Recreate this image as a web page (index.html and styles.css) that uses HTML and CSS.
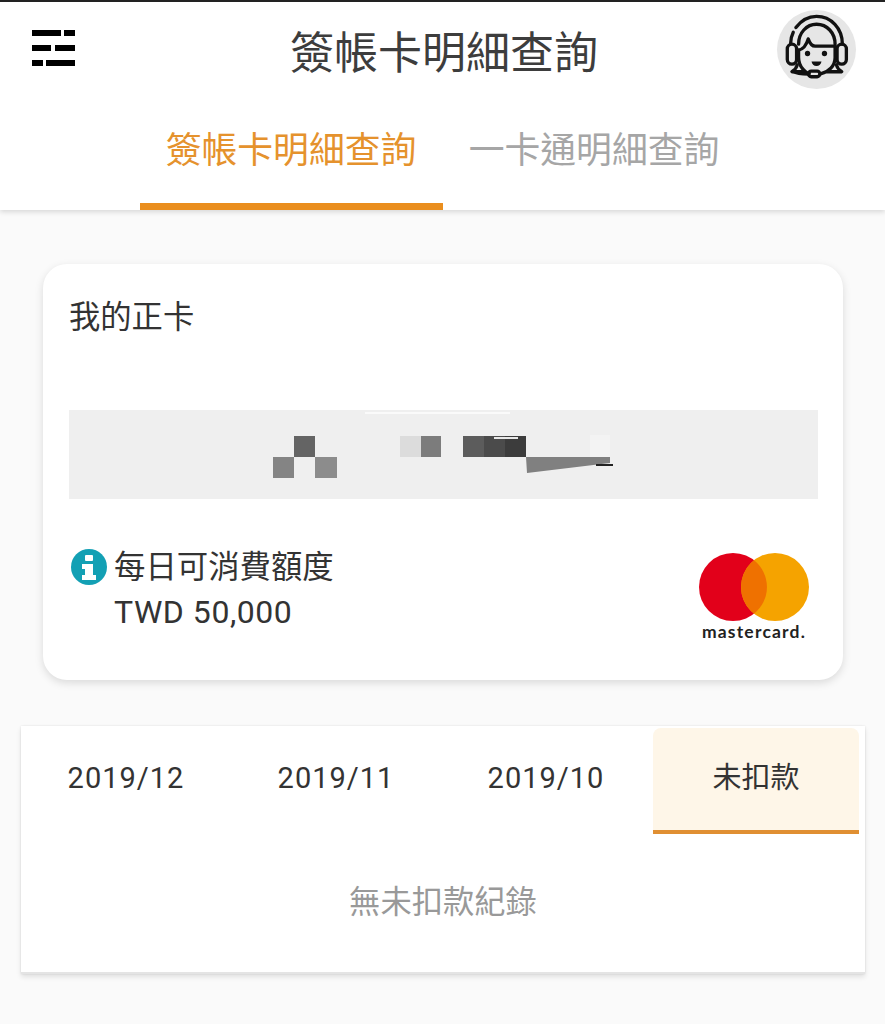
FILE: index.html
```html
<!DOCTYPE html>
<html lang="zh-Hant">
<head>
    <meta charset="UTF-8">
    <meta name="viewport" content="width=device-width, initial-scale=1.0">
    <title>簽帳卡明細查詢</title>
    <link rel="stylesheet" href="styles.css">
</head>
<body>
    <header class="site-header">
        <div class="top-bar">
            <svg class="menu-icon" width="43" height="36" viewBox="0 0 43 36">
                <rect x="0" y="0" width="29" height="6"/>
                <rect x="32" y="0" width="11" height="6"/>
                <rect x="0" y="15" width="19" height="6"/>
                <rect x="23" y="15" width="20" height="6"/>
                <rect x="0" y="30" width="11" height="6"/>
                <rect x="14" y="30" width="29" height="6"/>
            </svg>
            <h1 class="page-title">簽帳卡明細查詢</h1>
            <div class="avatar">
                <svg width="79" height="79" viewBox="111 29 238 238" fill="none" stroke="#111" stroke-width="10" stroke-linecap="round" stroke-linejoin="round">
                    <path d="M152 130 C152 118 155 106 160 96"/>
                    <path d="M168 82 C184 60 206 48 230 48 C274 48 308 84 308 132"/>
                    <path d="M176 132 C176 98 200 72 230 72 C262 72 286 98 286 132"/>
                    <rect x="142" y="132" width="28" height="60" rx="14"/>
                    <rect x="292" y="132" width="28" height="60" rx="14"/>
                    <path d="M176 150 C186 148 198 140 205 116 C210 130 216 138 226 138 L286 138"/>
                    <path d="M176 150 L176 172 C176 202 200 220 208 220"/>
                    <path d="M286 138 L286 172 C286 198 266 216 244 221"/>
                    <path d="M172 194 C170 204 164 210 156 215 L194 215"/>
                    <path d="M290 194 C292 204 298 210 306 215 L262 215"/>
                    <path d="M160 214 C172 222 190 222 206 222"/>
                    <rect x="206" y="213" width="34" height="17" rx="8"/>
                    <circle cx="203" cy="160" r="8" fill="#111" stroke="none"/>
                    <circle cx="254" cy="160" r="8" fill="#111" stroke="none"/>
                    <path d="M215 184 L245 184 C244 192 238 198 230 198 C222 198 216 192 215 184 Z" fill="#111" stroke="none"/>
                </svg>
            </div>
        </div>
        <nav class="main-tabs">
            <a class="main-tab active">簽帳卡明細查詢</a>
            <a class="main-tab">一卡通明細查詢</a>
        </nav>
    </header>

    <main class="content">
        <section class="card-box">
            <p class="card-name">我的正卡</p>
            <div class="card-strip">
                <svg width="749" height="89" viewBox="0 0 749 89">
                    <rect x="296" y="2" width="145" height="2" fill="#fafafa"/>
                    <rect x="521" y="25" width="20" height="22" fill="#f3f3f3"/>
                    <rect x="225" y="26" width="21" height="21" fill="#646464"/>
                    <rect x="204" y="47" width="21" height="21" fill="#848484"/>
                    <rect x="246" y="47" width="22" height="21" fill="#8c8c8c"/>
                    <rect x="331" y="26" width="21" height="21" fill="#dcdcdc"/>
                    <rect x="352" y="26" width="20" height="21" fill="#7c7c7c"/>
                    <rect x="394" y="26" width="21" height="21" fill="#5c5c5c"/>
                    <rect x="415" y="26" width="21" height="21" fill="#4b4b4b"/>
                    <rect x="436" y="26" width="21" height="21" fill="#3c3c3c"/>
                    <rect x="425" y="27" width="24" height="2" fill="#e8e8e8"/>
                    <path d="M457 47 L541 47 L541 53 L458 63 Z" fill="#808080"/>
                    <rect x="527" y="54" width="17" height="2" fill="#222"/>
                </svg>
            </div>
            <div class="card-info">
                <svg class="info-icon" width="36" height="36" viewBox="0 0 36 36">
                    <circle cx="18" cy="18" r="18" fill="#13a0b4"/>
                    <rect x="14" y="6" width="8" height="6" rx="1" fill="#fff"/>
                    <path d="M11 15 H22 V26 H25 V31 H11 V26 H14 V20 H11 Z" fill="#fff"/>
                </svg>
                <div class="limit-text">
                    <div>每日可消費額度</div>
                    <div class="limit-amount">TWD 50,000</div>
                </div>
                <div class="mc-logo">
                    <svg width="110" height="68" viewBox="0 0 110 68">
                        <circle cx="34" cy="34" r="34" fill="#e2001a"/>
                        <circle cx="76" cy="34" r="34" fill="#f5a300"/>
                        <path d="M55 7.3 A34 34 0 0 1 55 60.7 A34 34 0 0 1 55 7.3 Z" fill="#ef7100"/>
                    </svg>
                    <span class="mc-name">mastercard.</span>
                </div>
            </div>
        </section>

        <section class="month-panel">
            <div class="month-tabs">
                <div class="month-tab">2019/12</div>
                <div class="month-tab">2019/11</div>
                <div class="month-tab">2019/10</div>
                <div class="month-tab active">未扣款</div>
            </div>
            <p class="empty-msg">無未扣款紀錄</p>
            <div class="panel-rule"></div>
        </section>
    </main>
</body>
</html>
```

FILE: styles.css
```css
* {
    box-sizing: border-box;
}

body {
    margin: 0;
    background-color: #fafafa;
    font-family: Roboto, "Noto Sans CJK TC", sans-serif;
    color: #333;
    height: 1024px;
    overflow: hidden;
}

.site-header {
    height: 210px;
    background-color: #fff;
    border-top: 2px solid #222;
    box-shadow: 0 2px 5px rgba(0, 0, 0, 0.14);
}

.top-bar {
    height: 98px;
    display: grid;
    grid-template-columns: 1fr auto 1fr;
    padding: 0 29px 0 32px;
}

.menu-icon {
    margin-top: 28px;
    fill: #000;
}

.page-title {
    margin: 0;
    font-size: 44px;
    font-weight: 400;
    line-height: 104px;
    color: #3d3d3d;
}

.avatar {
    justify-self: end;
    margin-top: 8px;
    width: 79px;
    height: 79px;
    border-radius: 50%;
    background-color: #e6e6e6;
}

.main-tabs {
    height: 110px;
    display: flex;
    justify-content: center;
}

.main-tab {
    width: 303px;
    font-size: 35.8px;
    line-height: 102px;
    text-align: center;
    color: #a6a6a6;
}

.main-tab.active {
    color: #e5922d;
    border-bottom: 7px solid #ea8e1e;
}

.content {
    padding: 54px 20px 0 21px;
}

.card-box {
    margin: 0 22px;
    height: 416px;
    padding: 29px 25px 0 26px;
    background-color: #fff;
    border-radius: 24px;
    box-shadow: 0 3px 8px rgba(0, 0, 0, 0.13);
}

.card-name {
    margin: 0;
    font-size: 31.3px;
    line-height: 50px;
    color: #333;
}

.card-strip {
    margin-top: 67px;
    height: 89px;
    background-color: #efefef;
}

.card-strip svg {
    display: block;
    filter: blur(0.5px);
}

.card-info {
    margin-top: 46px;
    display: flex;
    align-items: flex-start;
}

.info-icon {
    margin: 4px 7px 0 2px;
    flex-shrink: 0;
}

.limit-text {
    flex: 1;
    font-size: 31.4px;
    line-height: 45px;
    color: #333;
}

.limit-amount {
    font-size: 32px;
    letter-spacing: 0.55px;
}

.mc-logo {
    width: 120px;
    margin: 8px 4px 0 0;
    display: flex;
    flex-direction: column;
    align-items: center;
}

.mc-logo svg {
    display: block;
}

.mc-name {
    font-family: Lato, sans-serif;
    font-size: 17.5px;
    font-weight: 700;
    line-height: 20px;
    letter-spacing: 1.2px;
    margin-top: 1px;
    color: #222;
}

.month-panel {
    margin-top: 46px;
    height: 248px;
    display: flex;
    flex-direction: column;
    background-color: #fff;
    box-shadow: 0 0 2px rgba(0, 0, 0, 0.1), 0 3px 5px rgba(0, 0, 0, 0.1);
    border-bottom: 2px solid #e4e4e4;
}

.month-tabs {
    display: grid;
    grid-template-columns: repeat(4, 206px);
    column-gap: 4px;
    padding: 2px 6px 0 2px;
}

.month-tab {
    height: 106px;
    font-size: 29px;
    line-height: 100px;
    text-align: center;
    color: #333;
    letter-spacing: 1px;
}

.month-tab.active {
    background-color: #fef6e8;
    border-radius: 8px 8px 0 0;
    border-bottom: 4px solid #e08f32;
    letter-spacing: 0;
}

.empty-msg {
    margin: 0;
    font-size: 31.3px;
    line-height: 138px;
    text-align: center;
    color: #999;
}

.panel-rule {
    margin: auto 1px 2px 3px;
    height: 2px;
    background-color: #e9e9e9;
}
```
